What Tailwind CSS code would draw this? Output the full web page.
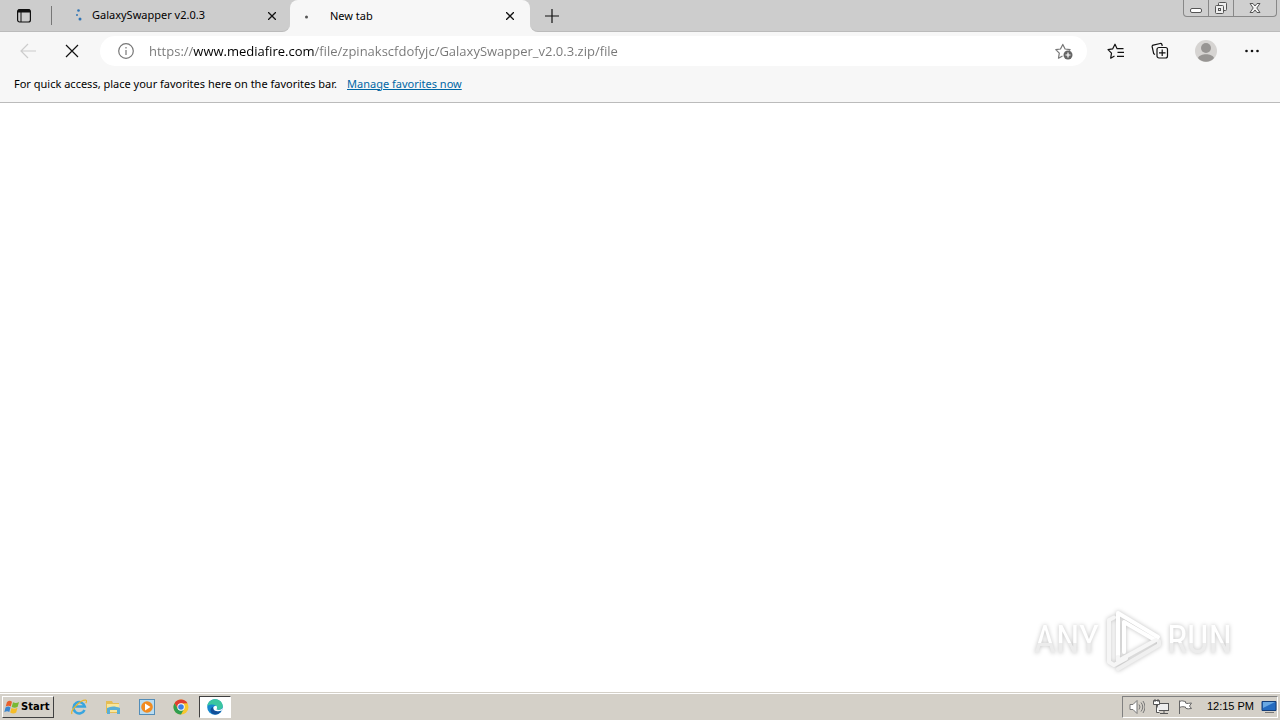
<!DOCTYPE html>
<html lang="en">
<head>
  <meta charset="UTF-8" />
  <meta name="viewport" content="width=device-width, initial-scale=1.0"/>
  <title>New tab</title>
  <script src="https://cdn.jsdelivr.net/npm/@tailwindcss/browser@4"></script>
</head>
<body class="h-screen flex flex-col overflow-hidden bg-white text-black font-['Noto_Sans',sans-serif] text-[11px]">

  <!-- Tab strip -->
  <header class="flex h-8 shrink-0 bg-[linear-gradient(#cdcdcd_50%,#f7f7f7_50%)]">
    <div class="flex rounded-br-lg border-b border-[#bbb] bg-[#cdcdcd]">
      <button aria-label="Tab actions" class="flex w-[51px] items-center justify-center pr-1">
        <svg class="size-4" viewBox="0 0 16 16" fill="none" stroke="#111"><rect x="1.6" y="1.6" width="12.8" height="12.4" rx="2" stroke-width="1.2"/><path d="M2 3.6h12M2 2.4h12" stroke-width="2"/><path d="M5 4v10"/></svg>
      </button>
      <div class="my-1.5 w-px bg-[#777]"></div>
      <div class="flex w-[238px] items-center pl-5 pr-2">
        <svg class="size-4" viewBox="0 0 16 16" fill="#2f74b5"><circle cx="6.500" cy="2.500" r="1.300"/><circle cx="5" cy="7" r="1"/><circle cx="8" cy="11" r="1.500"/></svg>
        <span class="ml-1 grow">GalaxySwapper v2.0.3</span>
        <button aria-label="Close tab" class="size-5 p-1.5"><svg viewBox="0 0 8 8" stroke="#111" stroke-width="1.300"><path d="M0 0l8 8M8 0L0 8"/></svg></button>
      </div>
    </div>
    <div class="flex w-60 items-center rounded-t-lg bg-[#f7f7f7] pl-3 pr-2.5">
      <svg class="size-4" viewBox="0 0 16 16" fill="#555"><circle cx="4.500" cy="9" r="1.500"/></svg>
      <span class="ml-3 grow">New tab</span>
      <button aria-label="Close tab" class="size-5 p-1.5"><svg viewBox="0 0 8 8" stroke="#111" stroke-width="1.300"><path d="M0 0l8 8M8 0L0 8"/></svg></button>
    </div>
    <div class="flex grow items-start justify-between rounded-bl-lg border-b border-[#bbb] bg-[#cdcdcd] pr-[3px]">
      <button aria-label="New tab" class="ml-3 mt-1.5 size-5 p-[3px]"><svg viewBox="0 0 14 14" stroke="#111" stroke-width="1.200"><path d="M7 0v14M0 7h14"/></svg></button>
      <div class="flex h-[17px] rounded-b border border-t-0 border-[#888] bg-[#cfcfcf]">
        <button aria-label="Minimize" class="flex w-6 items-center justify-center"><svg class="h-4 w-3.5" viewBox="0 0 14 16"><rect x="1.500" y="8.500" width="11" height="4" rx="1.500" fill="#fff" stroke="#555"/></svg></button>
        <button aria-label="Restore" class="flex w-[26px] items-center justify-center border-x border-[#888]"><svg class="h-4 w-3.5" viewBox="0 0 14 16" fill="#eee" stroke="#555"><rect x="4.500" y="2.500" width="8" height="8" rx="1"/><rect x="1.500" y="5.500" width="8" height="8" rx="1"/><rect x="4.500" y="8.500" width="2" height="2"/></svg></button>
        <button aria-label="Close" class="flex w-[42px] items-center justify-center"><svg class="h-4 w-3.5" viewBox="0 0 14 16"><path d="M2 3.500h3l2 2.500 2-2.500h3L8.800 8l3.200 4.500H9L7 10l-2 2.500H2L5.200 8z" fill="#f4f4f4" stroke="#555"/></svg></button>
      </div>
    </div>
  </header>

  <!-- Toolbar -->
  <nav class="flex h-[38px] shrink-0 items-center bg-[#f7f7f7]">
    <button aria-label="Back" class="ml-5 size-4" disabled><svg viewBox="0 0 16 16" fill="none" stroke="#ccc" stroke-width="1.200"><path d="M16 8H1M8 1L1 8l7 7"/></svg></button>
    <button aria-label="Stop" class="ml-7 size-4"><svg viewBox="0 0 16 16" stroke="#111" stroke-width="1.200"><path d="M2 2l12 12M14 2L2 14"/></svg></button>
    <div class="ml-5 flex h-[30px] grow items-center rounded-full bg-white pl-[18px] pr-3.5">
      <svg class="size-4" viewBox="0 0 16 16" fill="none" stroke="#777" stroke-width="1.200"><circle cx="8" cy="8" r="7.300"/><path d="M8 7v5M8 4v1.500"/></svg>
      <input type="text" aria-label="Address" value="https://www.mediafire.com/file/zpinakscfdofyjc/GalaxySwapper_v2.0.3.zip/file" class="ml-[15px] h-6 grow bg-[linear-gradient(to_right,#767676_44px,#000_44px,#000_165px,#767676_165px)] bg-clip-text font-['Open_Sans',sans-serif] text-[13px] text-transparent outline-none" />
      <button aria-label="Add to favorites" class="size-[18px]"><svg viewBox="0 0 18 18" fill="none" stroke="#777" stroke-width="1.200" stroke-linejoin="round"><path d="M7.500 14l-4 2.200.8-5L.8 7.700l4.700-.7L7.800 2.400l2.300 4.600 5 .7-1 1"/><circle cx="13" cy="13" r="4.500" fill="#666" stroke="none"/><path d="M13 10.500v5M10.500 13h5" stroke="#fff"/></svg></button>
    </div>
    <button aria-label="Favorites" class="ml-5 size-[18px]"><svg viewBox="0 0 18 18" fill="none" stroke="#111" stroke-width="1.200" stroke-linejoin="round"><path d="M7.500 14l-3.800 2.200.8-5L1 7.600l4.600-.7L8 2.200l2.100 4.500h6.400M10.500 10.400h6.500M10 14.300h7"/></svg></button>
    <button aria-label="Collections" class="ml-[26px] size-[18px]"><svg viewBox="0 0 18 18" fill="none" stroke="#111" stroke-width="1.200"><path d="M4 12.500l-1.300-.8L1.200 5c-.3-1 .2-1.600 1-1.800l7-1.700c.8-.2 1.500.2 1.700 1l.4 1.500"/><rect x="6" y="5.500" width="10.500" height="10.500" rx="2"/><path d="M11.200 7.500v6.500M8 10.800h6.500"/></svg></button>
    <button aria-label="Profile" class="ml-[26px] size-[22px]"><svg viewBox="0 0 22 22"><circle cx="11" cy="11" r="11" fill="#d6d4d2"/><circle cx="11" cy="8" r="5" fill="#979593"/><path d="M3 18c2-5 14-5 16 0-4 5-12 5-16 0z" fill="#979593"/></svg></button>
    <button aria-label="Settings and more" class="ml-[27px] mr-5 w-4"><svg viewBox="0 0 16 4" fill="#111"><circle cx="2.500" cy="2" r="1.300"/><circle cx="8" cy="2" r="1.300"/><circle cx="13.500" cy="2" r="1.300"/></svg></button>
  </nav>

  <!-- Favorites bar -->
  <div class="flex h-[33px] shrink-0 items-center gap-2.5 border-b border-[#bbb] bg-[#f7f7f7] px-3.5 pb-1">
    <span>For quick access, place your favorites here on the favorites bar.</span>
    <a href="#" class="text-[#0067a5] underline">Manage favorites now</a>
  </div>

  <!-- Page -->
  <main class="flex grow items-end justify-end pb-5 pr-12">
    <div class="flex h-16 items-center gap-1 font-['Roboto_Condensed','Open_Sans_Condensed','Noto_Sans_Condensed','Liberation_Sans'] text-[38px] drop-shadow-[0_0_2px_rgba(0,0,0,0.25)]">
      <span class="bg-[linear-gradient(#fff_55%,#ececec_55%)] bg-clip-text text-transparent">ANY</span>
      <svg class="h-16 w-[60px]" viewBox="0 0 60 64" fill="none" stroke="#fff" stroke-width="4" stroke-linejoin="round" stroke-linecap="round">
        <path d="M11 9.500L6 12v42l5 3 12-6.500" stroke="#f6f6f6"/>
        <path d="M15 61l41-24v-4" stroke="#f0f0f0"/>
        <path d="M15 47V5l40 24-3 3-31-18v30" />
        <path d="M15 49v4l38-21" stroke="#f6f6f6"/>
      </svg>
      <span class="bg-[linear-gradient(#fff_55%,#ececec_55%)] bg-clip-text text-transparent">RUN</span>
    </div>
  </main>

  <!-- Taskbar -->
  <footer class="flex h-7 shrink-0 items-center border-t border-[#d4d0c8] bg-[#d4d0c8] shadow-[inset_0_1px_0_#fff]">
    <button class="ml-0.5 flex h-[22px] w-[52px] items-center gap-px border border-t-white border-l-white border-r-[#404040] border-b-[#404040] pl-px font-['DejaVu_Sans'] text-[10px] font-bold">
      <svg class="size-4 shrink-0" viewBox="0 0 16 16"><path d="M3 3c2-1.500 3-1.500 5-.3L6.800 7.500C5 6.300 3.500 6.500 1.700 7.500z" fill="#e8602c"/><path d="M9 3.200c2 1.200 4 1 6-.2l-1.300 4.800c-2 1.200-4 1.200-6 .1z" fill="#79b935"/><path d="M1.500 8.500c2-1.200 3.500-1.200 5 0L5.300 13c-1.500-1-3-1-5 .2z" fill="#3a86cf"/><path d="M7.500 9c2 1.100 4 1 6-.2l-1.300 4.800c-2 1.200-4 1.100-6 0z" fill="#f6bd28"/></svg>
      Start
    </button>
    <div class="ml-[17px] flex items-center gap-[18px]">
      <button aria-label="Internet Explorer" class="size-4"><svg viewBox="0 0 16 16" fill="none"><path d="M13.500 11a5.700 5.700 0 1 1 .3-3.500H4" stroke="#38a5df" stroke-width="2.500"/><path d="M1 15C-1 12 9 .5 15 1.200c1 .3.500 2-.2 3" stroke="#e9b52b" stroke-width="1.200"/></svg></button>
      <button aria-label="Windows Explorer" class="size-4"><svg viewBox="0 0 16 16"><path d="M1 2h6l1 2h6v10H1z" fill="#e5bd55"/><path d="M2 5h12v8H2z" fill="#f8e69b"/><path d="M2 9c4-2 8-2 13 0v6h-3v-4H5v4H2z" fill="#5aaed5"/></svg></button>
      <button aria-label="Windows Media Player" class="size-4"><svg viewBox="0 0 16 16"><rect x=".5" y=".5" width="15" height="15" fill="#b9dcf1" stroke="#538db8"/><circle cx="8" cy="8" r="5.800" fill="#f18b20"/><path d="M6 4.500v7L11.500 8z" fill="#fff"/></svg></button>
      <button aria-label="Chrome" class="size-4"><svg viewBox="0 0 16 16"><circle cx="8" cy="8" r="7.500" fill="#f7c72e"/><path d="M1.500 4.200a7.500 7.500 0 0 1 13 0L8 4.500 5 10z" fill="#df3d31"/><path d="M1.500 4.200A7.500 7.500 0 0 0 8 15.500L11 10H5z" fill="#2f9e50"/><circle cx="8" cy="8" r="3.700" fill="#fff"/><circle cx="8" cy="8" r="2.800" fill="#3c7fe4"/></svg></button>
    </div>
    <button aria-label="Microsoft Edge" class="ml-2.5 flex h-[22px] w-8 items-center justify-center border border-t-[#404040] border-l-[#404040] border-r-white border-b-white bg-white">
      <svg class="size-4" viewBox="0 0 16 16"><circle cx="8" cy="8" r="7.800" fill="#1688cf"/><path d="M.3 7C1.500-2 15-2 15.800 7c0 3-3 4.500-6.300 3.500.8-1.500 1-3-.8-4C6.500 5 3 5 .3 7z" fill="#3bc6a0"/><path d="M6.200 8c-.5 3 3 5.500 8 4-3 5-9.500 4-10.500.5C3 10 4.500 8 6.200 8z" fill="#124f99"/><path d="M9.500 10.500c.8-1.500.8-2.800-.3-3.800-2 0-3 1-2.900 2.300C6.600 12 10 13.300 15 11.500l.8-2.500c-1.500 2-4 2.300-6.300 1.500z" fill="#fff"/></svg>
    </button>

    <div class="ml-auto mr-0.5 flex h-[22px] items-center border border-t-[#808080] border-l-[#808080] border-r-white border-b-white pl-1.5 font-['Liberation_Sans']">
      <svg class="size-4" viewBox="0 0 16 16" fill="none" stroke="#777"><path d="M1 5.500h3l4-4v13l-4-4H1z" fill="#fff"/><path d="M10 5.500q2 2.500 0 5M12 3.500q3.500 4.500 0 9M14 2q4 6 0 12"/></svg>
      <svg class="ml-2 size-4" viewBox="0 0 16 16" fill="none" stroke="#555"><rect x="4.500" y="4.500" width="11" height="7" fill="#eee"/><path d="M7 14.500h8M11 12v2"/><path d="M.500 1.500h6v4h-6zM3.500 5.500v8h3M2 0v3M5 0v3" fill="#fff"/></svg>
      <svg class="ml-2 size-4" viewBox="0 0 16 16" fill="#fff" stroke="#666"><path d="M2.500 15V1.500M2.500 2.500c3-1.500 4 0 6 0v1.500c2 1 4 0 6 0l-2 3 2 2.500c-2 0-4 1-6-.5V8c-2 0-3-1-6 .5"/></svg>
      <span class="ml-3.5">12:15 PM</span>
      <svg class="ml-[7px] size-4" viewBox="0 0 16 16"><path d="M1 2.500h14v9H1z" fill="#246bc0" stroke="#123d79"/><path d="M2 3h12L2 9z" fill="#69a8e3"/><path d="M4 13.500h9" stroke="#777"/></svg>
    </div>
  </footer>
</body>
</html>
